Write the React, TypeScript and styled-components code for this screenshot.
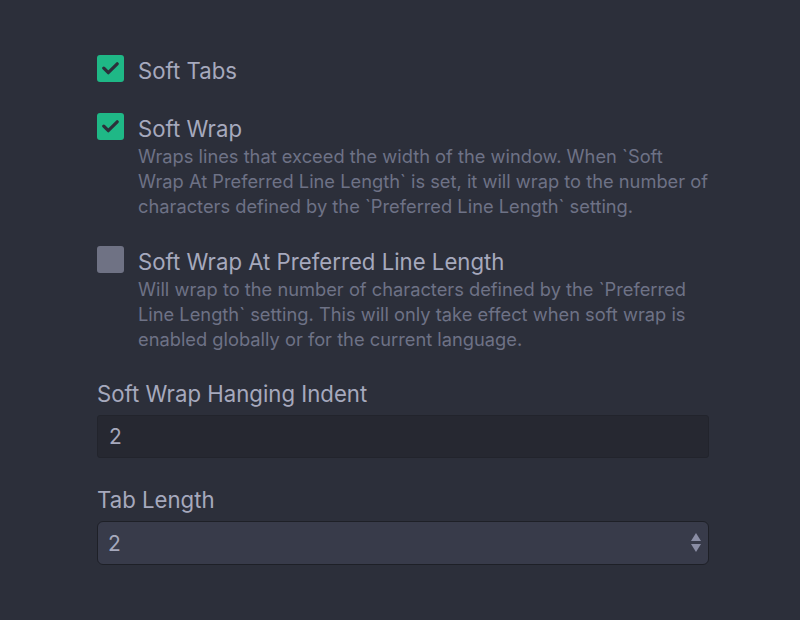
import React from "react";
import styled, { createGlobalStyle } from "styled-components";

const Global = createGlobalStyle`
  html, body { margin: 0; padding: 0; background: #2c2f3a; }
  body { font-family: Inter, "Noto Sans", sans-serif; }
`;

const Page = styled.div`
  width: 800px;
  height: 620px;
  box-sizing: border-box;
  background: #2c2f3a;
  padding: 55px 91px 0 97px;
  display: flex;
  flex-direction: column;
`;

const CheckRow = styled.div<{ $mb: number }>`
  display: grid;
  grid-template-columns: 27px 1fr;
  column-gap: 14px;
  margin-bottom: ${(p) => p.$mb}px;
`;

const TextCol = styled.div`
  padding-top: 2px;
`;

const Box = styled.div<{ $on: boolean }>`
  width: 27px;
  height: 27px;
  border-radius: 3px;
  background: ${(p) => (p.$on ? "#1fb886" : "#6f7284")};
  display: flex;
  align-items: center;
  justify-content: center;
`;

const Label = styled.div`
  font-size: 22.2px;
  line-height: 27px;
  color: #a6a9bd;
  white-space: nowrap;
`;

const Desc = styled.div`
  font-size: 18.3px;
  line-height: 25px;
  color: #6e7286;
  margin-top: 2px;
  white-space: nowrap;
`;

const FieldLabel = styled.div`
  font-size: 22.2px;
  line-height: 27px;
  color: #a6a9bd;
  margin-bottom: 8px;
`;

const Input = styled.div`
  height: 43px;
  box-sizing: border-box;
  border: 1px solid #22242c;
  border-radius: 3px;
  background: #262831;
  color: #a6a9bd;
  font-size: 21px;
  display: flex;
  align-items: center;
  padding-left: 11px;
  margin-bottom: 28px;
`;

const Select = styled.div`
  height: 44px;
  box-sizing: border-box;
  border: 1px solid #1e2027;
  border-radius: 6px;
  background: #383b4a;
  color: #a6a9bd;
  font-size: 21px;
  display: flex;
  align-items: center;
  justify-content: space-between;
  padding: 0 6px 0 10px;
`;

const Check = () => (
  <svg width="17" height="13" viewBox="0 0 17 13">
    <path d="M1.8 6.2 L6.3 10.7 L15.2 1.8" fill="none" stroke="#2c2f3a" strokeWidth="3.2" strokeLinecap="round" strokeLinejoin="round" />
  </svg>
);

const Arrows = () => (
  <svg width="12" height="22" viewBox="0 0 12 22">
    <polygon points="6,1 11,9 1,9" fill="#8a8da4" />
    <polygon points="1,12 11,12 6,20" fill="#8a8da4" />
  </svg>
);

export default function App() {
  return (
    <>
      <Global />
      <Page>
        <CheckRow $mb={29}>
          <Box $on>
            <Check />
          </Box>
          <TextCol>
            <Label>Soft Tabs</Label>
          </TextCol>
        </CheckRow>
        <CheckRow $mb={27}>
          <Box $on>
            <Check />
          </Box>
          <TextCol>
            <Label>Soft Wrap</Label>
            <Desc>
              Wraps lines that exceed the width of the window. When `Soft
              <br />
              Wrap At Preferred Line Length` is set, it will wrap to the number of
              <br />
              characters defined by the `Preferred Line Length` setting.
            </Desc>
          </TextCol>
        </CheckRow>
        <CheckRow $mb={28}>
          <Box $on={false} />
          <TextCol>
            <Label>Soft Wrap At Preferred Line Length</Label>
            <Desc>
              Will wrap to the number of characters defined by the `Preferred
              <br />
              Line Length` setting. This will only take effect when soft wrap is
              <br />
              enabled globally or for the current language.
            </Desc>
          </TextCol>
        </CheckRow>
        <FieldLabel>Soft Wrap Hanging Indent</FieldLabel>
        <Input>2</Input>
        <FieldLabel>Tab Length</FieldLabel>
        <Select>
          <span>2</span>
          <Arrows />
        </Select>
      </Page>
    </>
  );
}
